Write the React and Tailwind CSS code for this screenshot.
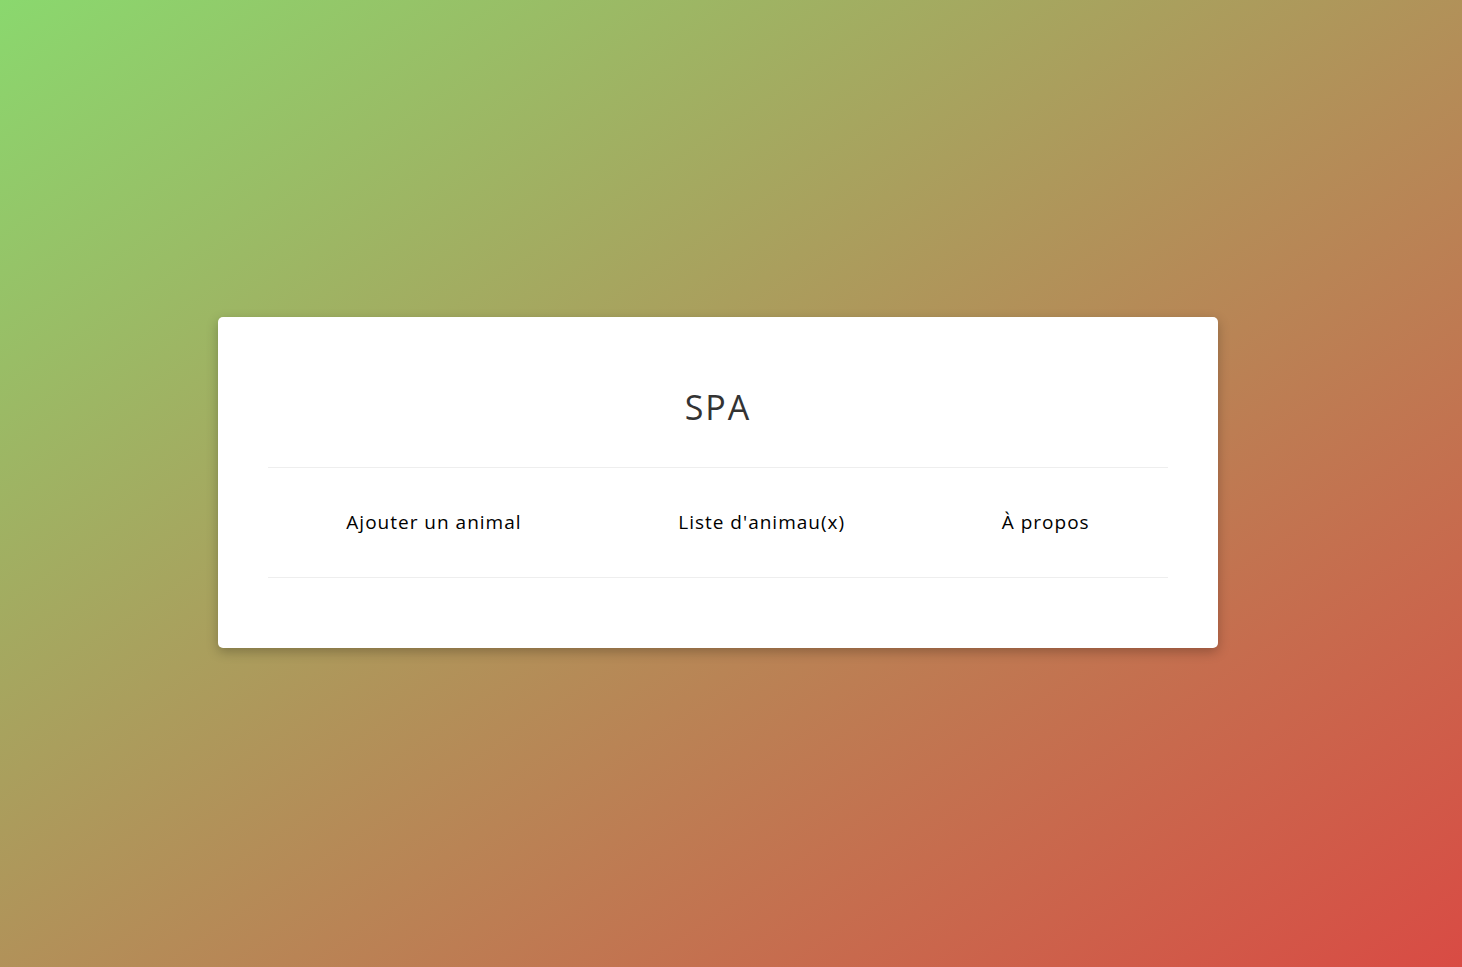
export default function App() {
  return (
    <div
      className="min-h-screen w-full flex items-center justify-center pr-[26px] bg-[linear-gradient(to_bottom_right,#8ad86e,#d94b44)]"
      style={{ fontFamily: '"Open Sans", "Noto Sans", sans-serif' }}
    >
      <div className="w-[1000px] bg-white rounded-[5px] shadow-[0_4px_12px_rgba(0,0,0,0.25)] px-[50px] pt-[50px] pb-[70px] -mt-[2px]">
        <h1 className="text-center text-[34px] leading-[48px] tracking-[2px] text-[#333] pt-[16px] pb-[36px] border-b border-[#eeeeee]">
          SPA
        </h1>
        <nav className="flex justify-around items-center h-[110px] border-b border-[#eeeeee] text-[19px] font-medium tracking-[1px] text-black">
          <a className="cursor-pointer">Ajouter un animal</a>
          <a className="cursor-pointer">Liste d'animau(x)</a>
          <a className="cursor-pointer">À propos</a>
        </nav>
      </div>
    </div>
  );
}
